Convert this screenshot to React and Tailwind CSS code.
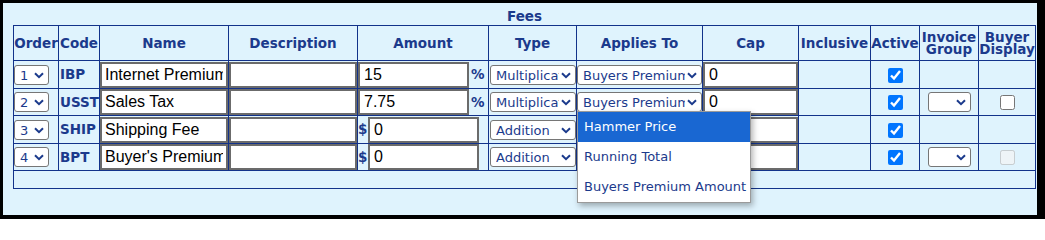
import React from "react";

const rows = [
  { order: "1", code: "IBP", name: "Internet Premium", amount: "15", unit: "%", type: "Multiplication", applies: "Buyers Premium Amount", invoice: false, buyer: "none", h: "h-[28px]" },
  { order: "2", code: "USST", name: "Sales Tax", amount: "7.75", unit: "%", type: "Multiplication", applies: "Buyers Premium Amount", invoice: true, buyer: "box", h: "h-[27px]" },
  { order: "3", code: "SHIP", name: "Shipping Fee", amount: "0", unit: "$", type: "Addition", applies: "Hammer Price", invoice: false, buyer: "none", h: "h-[28px]" },
  { order: "4", code: "BPT", name: "Buyer's Premium", amount: "0", unit: "$", type: "Addition", applies: "Hammer Price", invoice: true, buyer: "disabled", h: "h-[27px]" },
];

const cols = ["w-[45px]", "w-[41px]", "w-[129px]", "w-[129px]", "w-[131px]", "w-[88px]", "w-[126px]", "w-[96px]", "w-[72px]", "w-[49px]", "w-[59px]", "w-[57px]"];

const heads = ["Order", "Code", "Name", "Description", "Amount", "Type", "Applies To", "Cap", "Inclusive", "Active", "Invoice Group", "Buyer Display"];

const txt = "block h-[26px] border-2 border-[#6b6b6b] bg-white px-[3px] text-[16px] text-black font-['Liberation_Sans',Arial,sans-serif]";

// native select with the arrow drawn on top
const Select = ({ className, value, options }) => (
  <div className={`relative h-[20px] ${className}`}>
    <select
      className="block w-full h-full appearance-none rounded-[3px] border border-[#767676] bg-white pl-[5px] pr-[16px] text-[13px] text-[#1b3a8c] overflow-hidden"
      defaultValue={value}
    >
      {options.map((o) => (
        <option key={o}>{o}</option>
      ))}
    </select>
    <svg className="pointer-events-none absolute right-[5px] top-[7px]" width="10" height="7" viewBox="0 0 10 7">
      <path d="M1 1.2 L5 5.2 L9 1.2" fill="none" stroke="#1b3a8c" strokeWidth="2" />
    </svg>
  </div>
);

const App = () => {
  return (
    <div className="w-[1045px] h-[219px] bg-black pl-[3px] pt-[3px] font-['DejaVu_Sans',Verdana,sans-serif]">
      <div className="relative w-[1034px] h-[212px] bg-[#dff3fd] pl-[10px]">
        <div className="w-[1023px] h-[22px] pt-[6px] text-center text-[13.5px] leading-[14px] font-bold text-[#1b3a8c]">
          Fees
        </div>
        <table className="table-fixed border-collapse w-[1023px] text-[#1b3a8c]">
          <colgroup>
            {cols.map((c, i) => (
              <col key={i} className={c} />
            ))}
          </colgroup>
          <thead>
            <tr className="h-[35px]">
              {heads.map((h) => (
                <th key={h} className="border border-[#12328a] p-0 text-center align-middle text-[13.5px] leading-[12px] font-bold">
                  {h}
                </th>
              ))}
            </tr>
          </thead>
          <tbody>
            {rows.map((r) => (
              <tr key={r.code} className={r.h}>
                <td className="border border-[#12328a] p-0">
                  <Select className="w-[35px]" value={r.order} options={["1", "2", "3", "4"]} />
                </td>
                <td className="border border-[#12328a] p-0 pl-[1px] text-[13.5px] font-bold">{r.code}</td>
                <td className="border border-[#12328a] p-0">
                  <input className={`${txt} w-full`} defaultValue={r.name} />
                </td>
                <td className="border border-[#12328a] p-0">
                  <input className={`${txt} w-full`} defaultValue="" />
                </td>
                <td className="border border-[#12328a] p-0">
                  {r.unit === "%" ? (
                    <div className="flex items-center">
                      <input className={`${txt} w-[111px] pl-[4px]`} defaultValue={r.amount} />
                      <span className="ml-[2px] text-[13.5px] font-bold">%</span>
                    </div>
                  ) : (
                    <div className="flex items-center">
                      <span className="w-[10px] text-[13.5px] font-bold">$</span>
                      <input className={`${txt} w-[111px] pl-[4px]`} defaultValue={r.amount} />
                    </div>
                  )}
                </td>
                <td className="border border-[#12328a] p-0">
                  <Select className="ml-[1px] w-[86px]" value={r.type} options={["Addition", "Multiplication"]} />
                </td>
                <td className="border border-[#12328a] p-0">
                  <Select className="w-[125px]" value={r.applies} options={["Hammer Price", "Running Total", "Buyers Premium Amount"]} />
                </td>
                <td className="border border-[#12328a] p-0">
                  <input className={`${txt} w-full pl-[4px]`} defaultValue="0" />
                </td>
                <td className="border border-[#12328a] p-0"></td>
                <td className="border border-[#12328a] p-0 text-center">
                  <input type="checkbox" defaultChecked className="align-middle w-[15px] h-[15px]" />
                </td>
                <td className="border border-[#12328a] p-0">
                  {r.invoice && <Select className="mx-auto w-[43px]" value="" options={[""]} />}
                </td>
                <td className="border border-[#12328a] p-0 text-center">
                  {r.buyer === "box" && <input type="checkbox" className="align-middle w-[15px] h-[15px]" />}
                  {r.buyer === "disabled" && <input type="checkbox" disabled className="align-middle w-[15px] h-[15px]" />}
                </td>
              </tr>
            ))}
            <tr className="h-[18px]">
              <td colSpan={12} className="border border-[#12328a] p-0"></td>
            </tr>
          </tbody>
        </table>

        <div className="absolute left-[574px] top-[108px] w-[174px] border border-[#9a9a9a] bg-white shadow-[2px_3px_6px_rgba(0,0,0,0.3)] text-[13px] text-[#1b3a8c]">
          <div className="h-[30px] pl-[6px] leading-[30px] bg-[#1967d2] text-white">Hammer Price</div>
          <div className="h-[30px] pl-[6px] leading-[30px]">Running Total</div>
          <div className="h-[30px] pl-[6px] leading-[30px] whitespace-nowrap">Buyers Premium Amount</div>
        </div>
      </div>
    </div>
  );
};

export default App;
